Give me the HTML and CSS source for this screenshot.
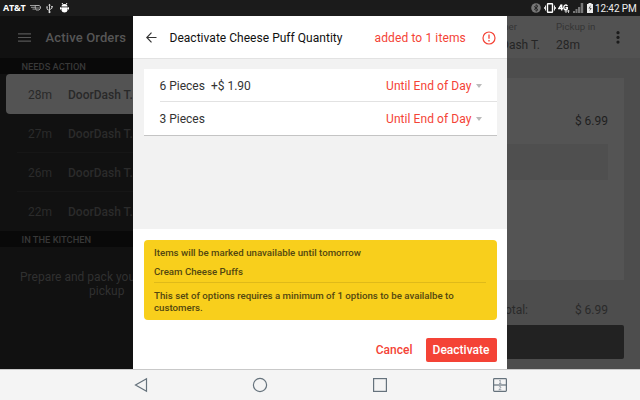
FILE: index.html
```html
<!DOCTYPE html>
<html lang="en">
<head>
<meta charset="utf-8">
<title>Deactivate options</title>
<link rel="stylesheet" href="styles.css">
</head>
<body>
<div class="screen">
  <header class="status">
    <span class="carrier">AT&amp;T</span>
    <svg class="s-key" width="11" height="8" viewBox="0 0 11 8"><path d="M0 1.500h6M1 3.300h4M2.500 5.100h3" stroke="#999" fill="none"/><path d="M5 1.500h4l1.500 1v2l-1.500 1.500h-3z" fill="none" stroke="#aaa"/><path d="M7 3v2M9 3v2" stroke="#888"/></svg>
    <svg class="s-usb" width="7" height="11" viewBox="0 0 8 11"><path d="M4 1v9M1.200 4v2.200L4 8M6.800 3v2.200L4 7" fill="none" stroke="#ddd"/><path d="M2.500 2.200L4 0l1.500 2.200z" fill="#ddd"/><circle cx="4" cy="9.600" r="1.200" fill="#ddd"/><circle cx="1.200" cy="3.800" r=".9" fill="#ddd"/><path d="M6 2.500h1.700v1.700H6z" fill="#ddd"/></svg>
    <svg class="s-bug" width="9" height="10" viewBox="0 0 9 10"><path d="M1.500 3.600Q1.500 1 4.500 1t3 2.600zM1.500 4.500h6V7.500Q7 9.500 4.500 9.500T1.500 7.500z" fill="#fff"/><path d="M2 0l1 1.500M7 0l-1 1.500M.5 4.300v2.200M8.500 4.300v2.200M.5 5.200h8" stroke="#fff" fill="none"/></svg>
    <span class="grow"></span>
    <svg class="s-bt" width="10" height="10" viewBox="0 0 10 10"><circle cx="5" cy="5" r="4.800" fill="#777"/><path d="M3 3.300l4 3.400L5 8.300V1.700l2 1.600-4 3.400" fill="none" stroke="#222" stroke-width=".9"/></svg>
    <svg class="s-vib" width="12" height="10" viewBox="0 0 12 10"><rect x="3.500" y=".7" width="5" height="8.600" rx=".5" fill="none" stroke="#fff" stroke-width="1.400"/><path d="M1.500 2.500v5M10.500 2.500v5M.3 4v2M11.700 4v2" stroke="#fff" stroke-width=".9"/></svg>
    <svg class="s-4g" width="12" height="11" viewBox="0 0 12 11"><path d="M3.500 1.500L.8 5.500H5M3.700 1.500v6M9.500 3C7.500 1 5.800 2.500 5.800 4.500S7.500 7.500 9.300 6V4.700H7.500" fill="none" stroke="#fff" stroke-width="1.400"/><path d="M6.500 8h5M8 7v3M10.500 7v3" stroke="#ddd" stroke-width=".9"/></svg>
    <svg class="s-sig" width="11" height="10" viewBox="0 0 11 10"><path d="M0 8h2v2H0zM2.500 6h2v4h-2zM5 4h2.200v6H5zM7.700 0h2.500v10H7.700z" fill="#777"/></svg>
    <svg class="s-bat" width="6" height="10" viewBox="0 0 6 10"><path d="M0 1h1.500V0h3v1H6v9H0z" fill="#eee"/><path d="M3.800 2L1.500 5.500h1.700L2.300 8.500 4.700 5H3z" fill="#444"/></svg>
    <span class="clock">12:42 PM</span>
  </header>

  <div class="app">
    <aside class="side">
      <div class="side-head">
        <svg width="13" height="9" viewBox="0 0 13 9"><path d="M0 .8h13M0 4.500h13M0 8.200h13" stroke="#555" stroke-width="1.200"/></svg>
        <span class="side-title">Active Orders</span>
      </div>
      <div class="section">NEEDS ACTION</div>
      <div class="orders">
        <div class="order selected"><span class="mins">28m</span><span class="who">DoorDash T.</span></div>
        <div class="order"><span class="mins">27m</span><span class="who">DoorDash T.</span></div>
        <div class="order"><span class="mins">26m</span><span class="who">DoorDash T.</span></div>
        <div class="order last"><span class="mins">22m</span><span class="who">DoorDash T.</span></div>
      </div>
      <div class="section">IN THE KITCHEN</div>
      <div class="empty"><p>Prepare and pack you</p><p class="empty-end">pickup</p></div>
    </aside>
    <main class="detail">
      <div class="detail-head">
        <div class="field customer"><span class="label">Customer</span><span class="value">DoorDash T.</span></div>
        <div class="field pickup"><span class="label">Pickup in</span><span class="value">28m</span></div>
        <svg width="4" height="13" viewBox="0 0 4 13"><g fill="#1b1b1b"><circle cx="2" cy="1.700" r="1.600"/><circle cx="2" cy="6.400" r="1.600"/><circle cx="2" cy="11.100" r="1.600"/></g></svg>
      </div>
      <div class="ticket">
        <div class="price">$ 6.99</div>
        <div class="note"></div>
      </div>
      <div class="total"><span>Total:</span><span class="amount">$ 6.99</span></div>
      <div class="confirm"></div>
    </main>

    <section class="dialog">
      <div class="dlg-head">
        <svg class="back" width="11" height="11" viewBox="0 0 11 11"><path d="M10.500 5.500H1M5.500 .7L.8 5.500l4.700 4.800" fill="none" stroke="#333" stroke-width="1.200"/></svg>
        <h1>Deactivate Cheese Puff Quantity</h1>
        <span class="added">added to 1 items</span>
        <svg class="alert" width="14" height="14" viewBox="0 0 14 14"><circle cx="7" cy="7" r="6" fill="none" stroke="#f44336" stroke-width="1.200"/><path d="M7 3.500v4.300M7 9.100v1.400" stroke="#f44336" stroke-width="1.300"/></svg>
      </div>
      <div class="dlg-body">
        <div class="options">
          <div class="option"><span class="name">6 Pieces</span><span class="extra">+$ 1.90</span><span class="until">Until End of Day</span><i class="caret"></i></div>
          <div class="option"><span class="name">3 Pieces</span><span class="until">Until End of Day</span><i class="caret"></i></div>
        </div>
      </div>
      <div class="warning">
        <p class="w-title">Items will be marked unavailable until tomorrow</p>
        <p class="w-item">Cream Cheese Puffs</p>
        <p class="w-text">This set of options requires a minimum of 1 options to be availalbe to<br>customers.</p>
      </div>
      <div class="actions"><span class="cancel">Cancel</span><span class="deactivate"><b>Deactivate</b></span></div>
    </section>
  </div>

  <nav class="nav">
    <svg width="14" height="16" viewBox="0 0 14 16"><path d="M12.500 1.700v12.600L1.500 8z" fill="none" stroke="#65727c" stroke-width="1.200"/></svg>
    <svg width="16" height="16" viewBox="0 0 16 16"><circle cx="8" cy="8" r="6.600" fill="none" stroke="#65727c" stroke-width="1.200"/></svg>
    <svg width="16" height="16" viewBox="0 0 16 16"><rect x="1.600" y="1.600" width="12.800" height="12.800" fill="none" stroke="#65727c" stroke-width="1.200"/></svg>
    <svg width="16" height="16" viewBox="0 0 16 16"><rect x="1.600" y="1.600" width="12.800" height="12.800" rx=".8" fill="none" stroke="#65727c" stroke-width="1.200"/><path d="M1.600 8h12.800" stroke="#65727c" stroke-width="1.200"/><path d="M7.300 3.700L8.200 3v3.500M7 6.500h2.400M6.800 10q1.300-1 2.200 0 0 1-2.200 2.700h2.500" fill="none" stroke="#87919a" stroke-width=".8"/></svg>
  </nav>
</div>
</body>
</html>
```
FILE: styles.css
```css
* { box-sizing: border-box; }
body { margin: 0; font-family: Roboto, "Liberation Sans", sans-serif; font-size: 12px; white-space: nowrap; }
h1, p { margin: 0; font-weight: 400; }
svg { display: block; flex: none; }
.screen { width: 640px; height: 400px; overflow: hidden; display: flex; flex-direction: column; }
.grow { flex: 1; }

.status { height: 16px; flex: none; display: flex; align-items: center; padding: 0 5px 0 3px; background: #1b1b1b; color: #fff; }
.carrier { width: 27px; font: 700 9px/16px "Open Sans", sans-serif; letter-spacing: -.2px; }
.s-usb { margin-left: 5px; }
.s-bug { margin-left: 7px; }
.s-vib { margin-left: 3px; }
.s-4g { margin-left: 2px; }
.s-sig { margin-left: 3px; }
.s-bat { margin-left: 3px; }
.clock { width: 40px; margin-left: 2px; font-size: 10px; letter-spacing: -.1px; line-height: 17px; color: #eee; }

.app { position: relative; height: 353px; flex: none; display: flex; background: #505050; }
.side { width: 213px; background: #111; color: #2b2b2b; }
.side-head { height: 42px; display: flex; align-items: center; padding-left: 18px; gap: 14.5px; padding-top: 1px; }
.side-title { color: #565656; font-size: 13px; font-weight: 500; letter-spacing: .15px; }
.section { height: 16px; padding-left: 21.5px; background: #090909; color: #383838; font-size: 9.3px; font-weight: 500; line-height: 17px; }
.orders { height: 157px; }
.order { height: 39px; display: flex; align-items: center; margin-left: 17px; padding-left: 11px; padding-top: 1px; border-bottom: 1px solid #161616; }
.order.last { border-bottom: 0; }
.order.selected { height: 40px; margin-left: 6px; padding-left: 22px; border: 0; border-radius: 4px; background: #535353; color: #292929; }
.mins { width: 40px; }
.who { font-weight: 500; }
.empty { width: 133px; padding: 23px 0 0 20px; line-height: 14px; color: #303030; }
.empty-end { margin-left: 69px; }

.detail { flex: 1; background: #4d4d4d; color: #1f1f1f; }
.detail-head { height: 42px; display: flex; align-items: center; padding-right: 20px; background: #525252; color: #252525; }
.field { display: flex; flex-direction: column; }
.label { font-size: 9.7px; line-height: 14px; padding-top: 1px; color: #353535; }
.value { line-height: 20px; margin-top: 1px; }
.customer { margin-left: auto; align-items: flex-end; width: 80px; }
.customer .label { padding-right: 23px; }
.pickup { width: 60px; margin-left: 16px; }
.ticket { height: 202px; margin: 20px 16px 0 16px; padding: 35px 16px 0; background: #545454; }
.price { text-align: right; line-height: 16px; }
.note { height: 36px; margin-top: 15px; background: #4f4f4f; }
.total { height: 45px; padding: 14px 32px 0 0; display: flex; justify-content: flex-end; line-height: 33px; color: #2a2a2a; }
.amount { width: 80px; text-align: right; }
.confirm { height: 34px; margin: 0 16px; border-radius: 2px; background: #222; }

.dialog { position: absolute; left: 133px; top: 0; width: 374px; height: 353px; display: flex; flex-direction: column; background: #fff; }
.dlg-head { height: 42px; flex: none; display: flex; align-items: center; padding: 1px 11px 0 13px; color: #111; }
.dlg-head h1 { width: 205px; margin-left: 12.5px; font-size: 12px; letter-spacing: .03px; }
.added { color: #f44336; font-size: 12px; letter-spacing: .12px; }
.alert { margin-left: auto; }
.dlg-body { height: 171px; padding: 10px 10.5px 0; background: #f2f2f2; border-top: 1px solid #e2e2e2; }
.options { height: 66px; padding-left: 16px; background: #fff; box-shadow: 0 1px 0 #c4c4c4; }
.option { height: 33px; display: flex; align-items: center; padding-right: 15px; padding-top: 1px; border-bottom: 1px solid #e2e2e2; color: #333; }
.option:last-child { border-bottom: 0; }
.extra { margin-left: 6px; }
.until { margin-left: auto; color: #f44336; letter-spacing: .07px; }
.caret { margin-left: 4px; border: 3.5px solid transparent; border-top: 4px solid #bbb; border-bottom: 0; }
.warning { height: 80px; margin: 11px 10.5px 0; padding: 7px 10.5px 0; border-radius: 4px; background: #f8cf1c; color: #534710; font-size: 9.7px; line-height: 12px; }
.warning p { font-weight: 500; }
.w-item { margin-top: 7px; padding-bottom: 4px; border-bottom: 1px solid #dfba19; }
.w-text { margin-top: 7px; }
.actions { display: flex; justify-content: flex-end; align-items: center; margin: 18px 10.5px 0 0; color: #f44336; font-weight: 500; }
.deactivate { width: 71px; height: 24px; margin-left: 13px; border-radius: 2px; background: #f44336; color: #fff; line-height: 25px; text-align: center; }
.deactivate b { font-weight: 500; }

.nav { height: 31px; display: flex; align-items: center; justify-content: space-between; padding: 0 132px 0 134px; background: #f4f4f4; border-top: 1px solid #c9c9c9; }
```
